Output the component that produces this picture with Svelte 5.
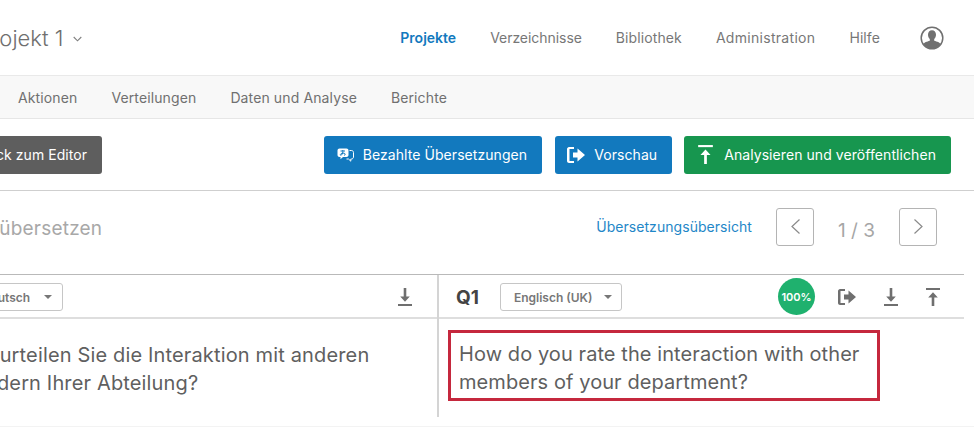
<script>
  const nav = ['Projekte', 'Verzeichnisse', 'Bibliothek', 'Administration', 'Hilfe'];
  const tabs = ['Aktionen', 'Verteilungen', 'Daten und Analyse', 'Berichte'];
</script>

{#snippet exportIcon(size)}
  <svg width={size} height={size} viewBox="0 0 18 18" fill="currentColor">
    <path d="M7 1H2C1 1 0 2 0 3V15C0 16 1 17 2 17H7V15H2.500V3H7Z" />
    <path d="M6 6.500H10.500V2.500L18 9L10.500 15.500V11.500H6Z" />
  </svg>
{/snippet}

{#snippet downloadIcon()}
  <svg width="16" height="20" viewBox="0 0 16 20" fill="currentColor">
    <path d="M6.700 1H9.300V9.500H12.800L8 14.800L3.200 9.500H6.700Z" />
    <rect x="1" y="17" width="14" height="2" />
  </svg>
{/snippet}

{#snippet uploadIcon(w, h)}
  <svg width={w} height={h} viewBox="0 0 16 20" fill="currentColor">
    <rect x="1" y="1" width="14" height="2" />
    <path d="M6.700 19H9.300V10.500H12.800L8 5.200L3.200 10.500H6.700Z" />
  </svg>
{/snippet}

<div class="page">
  <div class="inner">
    <header class="top">
      <div class="project">
        <span>Projekt 1</span>
        <svg class="chev" width="9" height="6" viewBox="0 0 9 6" fill="none" stroke="currentColor" stroke-width="1.100">
          <path d="M0.700 1L4.500 4.800L8.300 1" />
        </svg>
      </div>
      <nav class="main-nav">
        {#each nav as item, i}
          <span class:active={i === 0}>{item}</span>
        {/each}
        <svg class="user" width="24" height="24" viewBox="0 0 24 24">
          <defs>
            <clipPath id="user-clip"><circle cx="12" cy="12" r="10.500" /></clipPath>
          </defs>
          <g clip-path="url(#user-clip)" fill="#707070">
            <path d="M12 4.300C9.500 4.300 8 6.200 8 8.800C8 10.600 8.800 12.200 9.800 13.100V14.800C7 15.700 4 16.300 3.500 18.500V24H20.500V18.500C20 16.300 17 15.700 14.200 14.800V13.100C15.200 12.200 16 10.600 16 8.800C16 6.200 14.500 4.300 12 4.300Z" />
          </g>
          <circle cx="12" cy="12" r="10.800" fill="none" stroke="#707070" stroke-width="1.500" />
        </svg>
      </nav>
    </header>

    <div class="sub-nav">
      {#each tabs as tab}
        <span>{tab}</span>
      {/each}
    </div>

    <div class="toolbar">
      <button class="btn dark">Zurück zum Editor</button>
      <div class="actions">
        <button class="btn blue paid">
          <svg width="18" height="16" viewBox="0 0 18 16">
            <path fill="#fff" d="M2.500 1.500H9.500C10.600 1.500 11.500 2.400 11.500 3.500V8C11.500 9.100 10.600 10 9.500 10H6L3.500 12.200V10H2.500C1.400 10 0.500 9.100 0.500 8V3.500C0.500 2.400 1.400 1.500 2.500 1.500Z" />
            <path fill="none" stroke="#fff" stroke-width="1" d="M12.500 3.500H14.500C15.600 3.500 16.500 4.400 16.500 5.500V10C16.500 11.100 15.600 12 14.500 12H13.800V14.200L11.500 12H9.500" />
            <path fill="none" stroke="#1279be" stroke-width="1" d="M3.500 4H8M5.800 3V4.500C5.800 6.500 5 8 3.800 8.300C3 8.300 3.200 6.800 4.800 6.300C6.500 5.800 8.200 6.300 8.200 7.300C8.200 8 7.500 8.300 7 8.400" />
          </svg>
          Bezahlte Übersetzungen
        </button>
        <button class="btn blue preview">
          {@render exportIcon(18)}
          Vorschau
        </button>
        <button class="btn green publish">
          {@render uploadIcon(17, 21)}
          Analysieren und veröffentlichen
        </button>
      </div>
    </div>

    <div class="title-row">
      <h2>Umfrage übersetzen</h2>
      <div class="pager">
        <a href="#overview">Übersetzungsübersicht</a>
        <button class="page-btn" aria-label="Zurück">
          <svg width="11" height="17" viewBox="0 0 11 17" fill="none" stroke="currentColor" stroke-width="1.200"><path d="M9.500 1.500L2 8.500L9.500 15.500" /></svg>
        </button>
        <span class="count">1 / 3</span>
        <button class="page-btn" aria-label="Weiter">
          <svg width="11" height="17" viewBox="0 0 11 17" fill="none" stroke="currentColor" stroke-width="1.200"><path d="M1.500 1.500L9 8.500L1.500 15.500" /></svg>
        </button>
      </div>
    </div>

    <section class="panels">
      <div class="panel source">
        <div class="panel-head">
          <span class="select de">Deutsch<i></i></span>
          <span class="icons">{@render downloadIcon()}</span>
        </div>
        <p class="text">Wie beurteilen Sie die Interaktion mit anderen Mitgliedern Ihrer Abteilung?</p>
      </div>
      <div class="panel target">
        <div class="panel-head">
          <strong>Q1</strong>
          <span class="select en">Englisch (UK)<i></i></span>
          <span class="badge">100%</span>
          <span class="icons three">
            {@render exportIcon(18)}
            {@render downloadIcon()}
            {@render uploadIcon(16, 20)}
          </span>
        </div>
        <div class="edit-box">How do you rate the interaction with other members of your department?</div>
      </div>
    </section>
    <div class="foot"></div>
  </div>
</div>

<style>
  :global(body) {
    margin: 0;
    background: #fff;
  }

  .page {
    width: 974px;
    height: 427px;
    overflow: hidden;
    font-family: Inter, "Liberation Sans", sans-serif;
    color: #6b6b6b;
  }

  .inner {
    width: 1074px;
    margin-left: -100px;
  }

  .top {
    height: 75px;
    display: flex;
    align-items: center;
    justify-content: space-between;
    padding-right: 30px;
    border-bottom: 1px solid #e9e9e9;
  }

  .project {
    margin-left: 78px;
    display: flex;
    align-items: center;
    gap: 10px;
    font-size: 22px;
    font-weight: 300;
    color: #6f6f6f;
  }

  .chev {
    color: #808080;
    margin-top: 2px;
  }

  .main-nav {
    display: flex;
    align-items: center;
    gap: 34px;
    font-size: 14px;
    letter-spacing: 0.1px;
    color: #777;
  }

  .main-nav .active {
    color: #1279be;
    font-weight: 600;
    letter-spacing: 0;
  }

  /* widths of these two run off from the rest of the row */
  .main-nav span:nth-child(2) {
    letter-spacing: -0.05px;
  }

  .main-nav span:nth-child(4) {
    letter-spacing: 0.3px;
  }

  .user {
    margin-left: 6px;
  }

  .sub-nav {
    height: 42px;
    display: flex;
    align-items: center;
    gap: 34px;
    padding-left: 118px;
    background: #f8f8f8;
    border-bottom: 1px solid #e6e6e6;
    font-size: 14px;
    letter-spacing: 0.12px;
    color: #707070;
  }

  .toolbar {
    height: 72px;
    box-sizing: border-box;
    display: flex;
    align-items: center;
    justify-content: space-between;
    padding: 0 23px 0 50px;
    border-bottom: 1px solid #cfcfcf;
  }

  .actions {
    display: flex;
    gap: 12px;
  }

  .btn {
    height: 38px;
    display: flex;
    align-items: center;
    border: 0;
    border-radius: 3px;
    padding: 0 15px;
    color: #fff;
    font: 400 14px Inter, "Liberation Sans", sans-serif;
    letter-spacing: 0.07px;
    white-space: nowrap;
  }

  .dark {
    background: #5e5e5e;
  }

  .blue {
    background: #1279be;
  }

  .green {
    background: #17964f;
  }

  .paid {
    gap: 8px;
    padding-left: 13px;
    margin-right: 1px;
  }

  .preview {
    gap: 9px;
    padding: 0 15px 0 12px;
  }

  .publish {
    gap: 10px;
    padding-left: 13px;
  }

  .title-row {
    height: 83px;
    display: flex;
    align-items: center;
    justify-content: space-between;
    padding: 0 37px 12px 0;
    box-sizing: border-box;
  }

  h2 {
    margin: 4px 0 0 14px;
    font-size: 19px;
    letter-spacing: 0.2px;
    font-weight: 400;
    color: #a8a8a8;
  }

  .pager {
    display: flex;
    align-items: center;
  }

  .pager a {
    color: #1f87c8;
    font-size: 14px;
    letter-spacing: 0.05px;
    text-decoration: none;
    margin-right: 24px;
  }

  .page-btn {
    width: 38px;
    height: 38px;
    padding: 0;
    display: flex;
    align-items: center;
    justify-content: center;
    background: #fff;
    border: 1px solid #b4b4b4;
    border-radius: 3px;
    color: #8a8a8a;
  }

  .count {
    width: 85px;
    text-align: center;
    color: #a6a6a6;
    font-size: 19px;
    padding-top: 7px;
  }

  .panels {
    display: flex;
    width: 1064px;
    height: 142px;
    border-top: 1px solid #b9b9b9;
  }

  .panel {
    box-sizing: border-box;
  }

  .source {
    width: 539px;
    border-right: 2px solid #d4d4d4;
    flex: none;
  }

  .target {
    flex: 1;
  }

  .panel-head {
    height: 42px;
    display: flex;
    align-items: center;
    border-bottom: 2px solid #dedede;
  }

  .select {
    height: 28px;
    box-sizing: border-box;
    display: flex;
    align-items: center;
    justify-content: space-between;
    margin-top: 2px;
    border: 1px solid #c6c6c6;
    border-radius: 3px;
    font-size: 12px;
    font-weight: 600;
    color: #777;
    padding: 0 9px 0 13px;
  }

  .select i {
    width: 0;
    height: 0;
    border: 4px solid transparent;
    border-top-color: #777;
    border-bottom: 0;
  }

  .de {
    margin-left: 60px;
    width: 103px;
    padding: 0 10px 0 21px;
  }

  .en {
    margin-left: 21px;
    width: 122px;
  }

  .source .icons {
    margin: 2px 24px 0 auto;
    color: #6f6f6f;
    display: flex;
  }

  .target strong {
    margin: 3px 0 0 17px;
    font-size: 19px;
    font-weight: 700;
    color: #444;
  }

  .badge {
    width: 37px;
    height: 37px;
    margin: 1px 0 0 auto;
    border-radius: 50%;
    display: flex;
    align-items: center;
    justify-content: center;
    background: #1fb16e;
    color: #fff;
    font-size: 11px;
    font-weight: 600;
  }

  .three {
    display: flex;
    align-items: center;
    gap: 26.500px;
    margin: 2px 23px 0;
    color: #6f6f6f;
  }

  .text {
    margin: 22px 0 0 0;
    padding-left: 33px;
    width: 440px;
    font-size: 20px;
    letter-spacing: 0.15px;
    line-height: 28px;
    color: #5f5f5f;
  }

  .edit-box {
    box-sizing: border-box;
    width: 432px;
    height: 71px;
    margin: 11px 0 0 9px;
    padding: 7px 8px;
    border: 3px solid #c5283d;
    font-size: 20px;
    letter-spacing: 0.08px;
    line-height: 28px;
    color: #5f5f5f;
  }

  .foot {
    margin-top: 9px;
    border-top: 1px solid #f3f3f3;
  }
</style>
